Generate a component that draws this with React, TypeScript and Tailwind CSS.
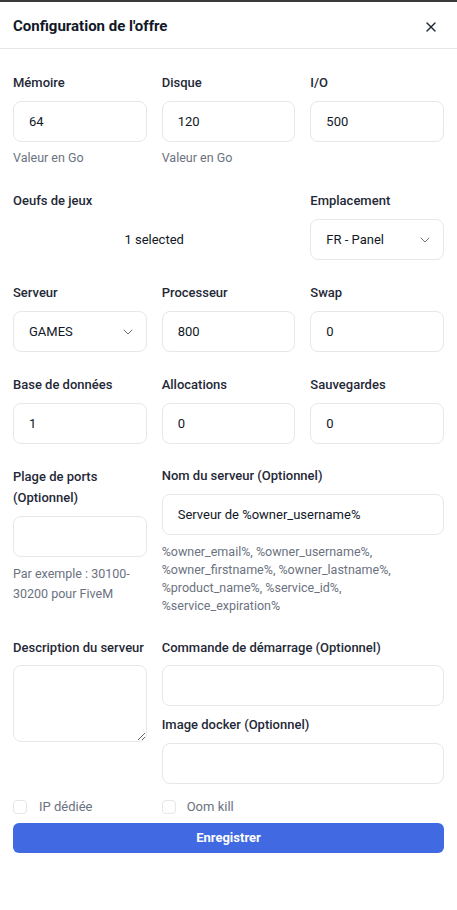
import { X, ChevronDown } from "lucide-react";

const font = { fontFamily: 'Roboto, "Noto Sans", "Liberation Sans", sans-serif' };

function Label({ children, mb = "mb-[8px]" }: { children: React.ReactNode; mb?: string }) {
  return <label className={`block text-[13px] leading-[20px] font-medium text-[#1f2937] ${mb}`}>{children}</label>;
}

function Field({ value = "" }: { value?: string }) {
  return (
    <input
      defaultValue={value}
      className="block w-full h-[41px] rounded-lg border border-[#e5e7eb] px-[15px] text-[13px] text-[#111827] outline-none"
    />
  );
}

function Select({ value }: { value: string }) {
  return (
    <div className="flex h-[41px] items-center justify-between rounded-lg border border-[#e5e7eb] pl-[15px] pr-[10px] text-[13px] text-[#111827]">
      <span>{value}</span>
      <ChevronDown className="h-4 w-4 text-[#6b7280]" strokeWidth={1.5} />
    </div>
  );
}

function Help({ children, lh = "leading-[18px]" }: { children: React.ReactNode; lh?: string }) {
  return <p className={`mt-[7px] text-[12.5px] text-[#6b7280] ${lh}`}>{children}</p>;
}

export default function App() {
  return (
    <div style={font} className="min-h-[910px] bg-white border-t-2 border-[#3a3a3a]">
      <div className="flex h-[47px] items-center justify-between border-b border-[#e5e7eb] pl-[13px] pr-[18px] pt-[3px]">
        <h2 className="text-[15px] font-bold text-[#111827]">Configuration de l'offre</h2>
        <X className="h-4 w-4 text-[#1f2937]" strokeWidth={2} />
      </div>

      <div className="px-[13px] pt-[24px]">
        <div className="grid grid-cols-3 gap-x-[15px]">
          <div>
            <Label>Mémoire</Label>
            <Field value="64" />
            <Help>Valeur en Go</Help>
          </div>
          <div>
            <Label>Disque</Label>
            <Field value="120" />
            <Help>Valeur en Go</Help>
          </div>
          <div>
            <Label>I/O</Label>
            <Field value="500" />
          </div>
        </div>

        <div className="mt-[24px] grid grid-cols-3 gap-x-[15px]">
          <div className="col-span-2 flex flex-col">
            <Label>Oeufs de jeux</Label>
            <div className="flex h-[41px] items-center justify-center text-[13px] text-[#111827]">1 selected</div>
          </div>
          <div>
            <Label>Emplacement</Label>
            <Select value="FR - Panel" />
          </div>
        </div>

        <div className="mt-[23px] grid grid-cols-3 gap-x-[15px]">
          <div>
            <Label>Serveur</Label>
            <Select value="GAMES" />
          </div>
          <div>
            <Label>Processeur</Label>
            <Field value="800" />
          </div>
          <div>
            <Label>Swap</Label>
            <Field value="0" />
          </div>
        </div>

        <div className="mt-[23px] grid grid-cols-3 gap-x-[15px]">
          <div>
            <Label>Base de données</Label>
            <Field value="1" />
          </div>
          <div>
            <Label>Allocations</Label>
            <Field value="0" />
          </div>
          <div>
            <Label>Sauvegardes</Label>
            <Field value="0" />
          </div>
        </div>

        <div className="mt-[22px] grid grid-cols-3 gap-x-[15px]">
          <div>
            <label className="block text-[13px] leading-[21px] font-medium text-[#1f2937] mb-[8px]">
              Plage de ports (Optionnel)
            </label>
            <Field />
            <Help lh="leading-[20px]">Par exemple : 30100-30200 pour FiveM</Help>
          </div>
          <div className="col-span-2">
            <Label>Nom du serveur (Optionnel)</Label>
            <Field value="Serveur de %owner_username%" />
            <p className="mt-[8px] text-[12.5px] leading-[18px] text-[#6b7280]">
              %owner_email%, %owner_username%, %owner_firstname%, %owner_lastname%, %product_name%,
              %service_id%, %service_expiration%
            </p>
          </div>
        </div>

        <div className="mt-[23px] grid grid-cols-3 gap-x-[15px]">
          <div>
            <Label mb="mb-[7px]">Description du serveur</Label>
            <textarea className="block w-full h-[77px] rounded-lg border border-[#e5e7eb] px-4 py-2 text-[13px] outline-none" />
          </div>
          <div className="col-span-2">
            <Label mb="mb-[7px]">Commande de démarrage (Optionnel)</Label>
            <Field />
            <div className="mt-[9px]">
              <Label>Image docker (Optionnel)</Label>
              <Field />
            </div>
          </div>
        </div>

        <div className="mt-[13px] grid grid-cols-3 gap-x-[15px]">
          <label className="flex h-[20px] items-center gap-3 text-[13px] text-[#6b7280]">
            <span className="h-[14px] w-[14px] rounded border border-[#e5e7eb]" />
            IP dédiée
          </label>
          <label className="flex h-[20px] items-center gap-[11px] text-[13px] text-[#6b7280]">
            <span className="h-[14px] w-[14px] rounded border border-[#e5e7eb]" />
            Oom kill
          </label>
        </div>

        <button className="mt-[6px] h-[30px] w-full rounded-md bg-[#4169e1] text-[13px] font-bold text-white">
          Enregistrer
        </button>
      </div>
    </div>
  );
}
